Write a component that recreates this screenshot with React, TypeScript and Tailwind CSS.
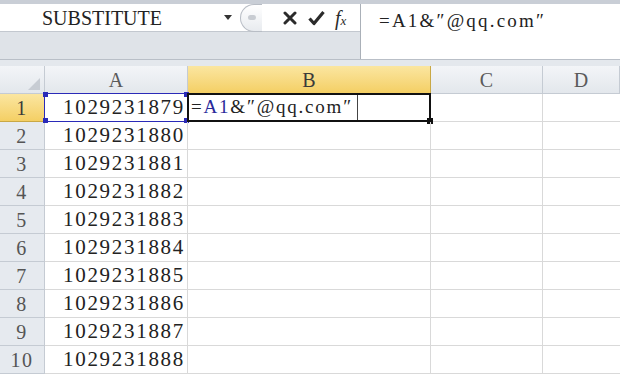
import React from "react";

const SERIF = { fontFamily: '"Liberation Serif", "Times New Roman", serif' };

const numbers = [
  "1029231879",
  "1029231880",
  "1029231881",
  "1029231882",
  "1029231883",
  "1029231884",
  "1029231885",
  "1029231886",
  "1029231887",
  "1029231888",
];

function ColHeader({ label, active }: { label: string; active?: boolean }) {
  return (
    <div
      className={
        "flex items-center justify-center border-r border-b text-[20px] " +
        (active
          ? "bg-gradient-to-b from-[#fbe6a0] to-[#f4cf63] border-[#c9a845] text-[#3a3a3a]"
          : "bg-gradient-to-b from-[#f3f5f8] to-[#e3e7ec] border-[#c5cbd3] text-[#5a5a5a]")
      }
      style={SERIF}
    >
      {label}
    </div>
  );
}

function RowHeader({ n, active }: { n: number; active?: boolean }) {
  return (
    <div
      className={
        "flex items-center justify-center border-r border-b text-[20px] tracking-[1.5px] " +
        (active
          ? "bg-gradient-to-b from-[#fbe6a0] to-[#f4cf63] border-[#c9a845] text-[#3a3a3a]"
          : "bg-[#e6eaef] border-[#c5cbd3] text-[#555]")
      }
      style={SERIF}
    >
      {n}
    </div>
  );
}

function Corner({ className }: { className: string }) {
  return <div className={"absolute w-[5px] h-[5px] bg-[#2a2ab8] " + className} />;
}

export default function App() {
  return (
    <div className="w-[620px] h-[376px] overflow-hidden bg-white flex flex-col">
      <div className="h-[4px] bg-[#c9ced6] shrink-0" />
      {/* formula bar */}
      <div className="h-[56px] flex shrink-0 border-b border-[#b9bfc7]">
        <div className="w-[361px] flex flex-col border-r border-[#aab0b8]">
          <div className="h-[28px] flex items-center bg-white border-b border-[#c3c8cf]">
            <div className="w-[240px] flex items-center">
              <span className="ml-[42px] text-[20px] text-[#222]" style={SERIF}>
                SUBSTITUTE
              </span>
              <svg className="ml-auto mr-[8px]" width="8" height="5" viewBox="0 0 8 5">
                <path d="M0 0 L8 0 L4 5 Z" fill="#333" />
              </svg>
            </div>
            <div className="w-[22px] h-[28px] rounded-l-full border border-r-0 border-[#b8bdc5] bg-gradient-to-b from-white to-[#e8ebef] flex items-center justify-center">
              <div className="w-[8px] h-[5px] rounded-full bg-[#c8ccd2]" />
            </div>
            <svg className="ml-[21px]" width="14" height="14" viewBox="0 0 14 14">
              <path d="M2 2 L12 12 M12 2 L2 12" stroke="#2b2b2b" strokeWidth="3" strokeLinecap="round" />
            </svg>
            <svg className="ml-[11px]" width="17" height="16" viewBox="0 0 17 16">
              <path d="M1.5 8.5 L6 13.5 L15.5 2" stroke="#2b2b2b" strokeWidth="3.2" fill="none" strokeLinejoin="round" />
            </svg>
            <span
              className="ml-[10px] italic text-[20px] text-[#2b2b2b] leading-none"
              style={SERIF}
            >
              f<span className="text-[13px]">x</span>
            </span>
          </div>
          <div className="flex-1 bg-[#dfe3e8]" />
        </div>
        <div className="flex-1 bg-white pl-[18px] pt-[3px]">
          <span className="text-[19px] text-[#222] tracking-[2.2px]" style={SERIF}>
            =A1&amp;″@qq.com″
          </span>
        </div>
      </div>
      <div className="h-[6px] bg-[#e4e8ed] shrink-0" />
      {/* grid */}
      <div className="grid grid-cols-[45px_143px_243px_112px_1fr] grid-rows-[28px_repeat(10,28px)] flex-1">
        <div className="relative border-r border-b border-[#c5cbd3] bg-gradient-to-b from-[#f3f5f8] to-[#e3e7ec]">
          <svg className="absolute right-[4px] bottom-[3px]" width="12" height="12" viewBox="0 0 12 12">
            <path d="M12 0 L12 12 L0 12 Z" fill="#c7ccd3" />
          </svg>
        </div>
        <ColHeader label="A" />
        <ColHeader label="B" active />
        <ColHeader label="C" />
        <ColHeader label="D" />
        {numbers.map((num, i) => (
          <React.Fragment key={num}>
            <RowHeader n={i + 1} active={i === 0} />
            <div
              className="relative flex items-center justify-end pr-[2px] border-r border-b border-[#d9d9d9] text-[21px] text-[#222]"
              style={SERIF}
            >
              {i === 0 && (
                <>
                  <div className="absolute inset-[-1px] border border-[#2a2ab8] pointer-events-none" />
                  <Corner className="left-[-2px] top-[-2px]" />
                  <Corner className="left-[-2px] bottom-[-2px]" />
                  <Corner className="right-[-2px] top-[-2px]" />
                  <Corner className="right-[-2px] bottom-[-2px]" />
                </>
              )}
              <span className="tracking-[1.7px]">{num}</span>
            </div>
            <div className="relative border-r border-b border-[#d9d9d9]">
              {i === 0 && (
                <div className="absolute left-[-1px] top-[-1px] right-[-1px] bottom-[-1px] border-2 border-[#111] flex items-center">
                  <div
                    className="h-full flex items-center pl-[2px] pr-[4px] border-r border-[#444] text-[19px] text-[#222] tracking-[1.8px]"
                    style={SERIF}
                  >
                    =<span className="text-[#2a2a9a]">A1</span>&amp;″@qq.com″
                  </div>
                  <div className="absolute right-[-4px] bottom-[-4px] w-[6px] h-[6px] bg-[#111]" />
                </div>
              )}
            </div>
            <div className="border-r border-b border-[#d9d9d9]" />
            <div className="border-b border-[#d9d9d9]" />
          </React.Fragment>
        ))}
      </div>
    </div>
  );
}
